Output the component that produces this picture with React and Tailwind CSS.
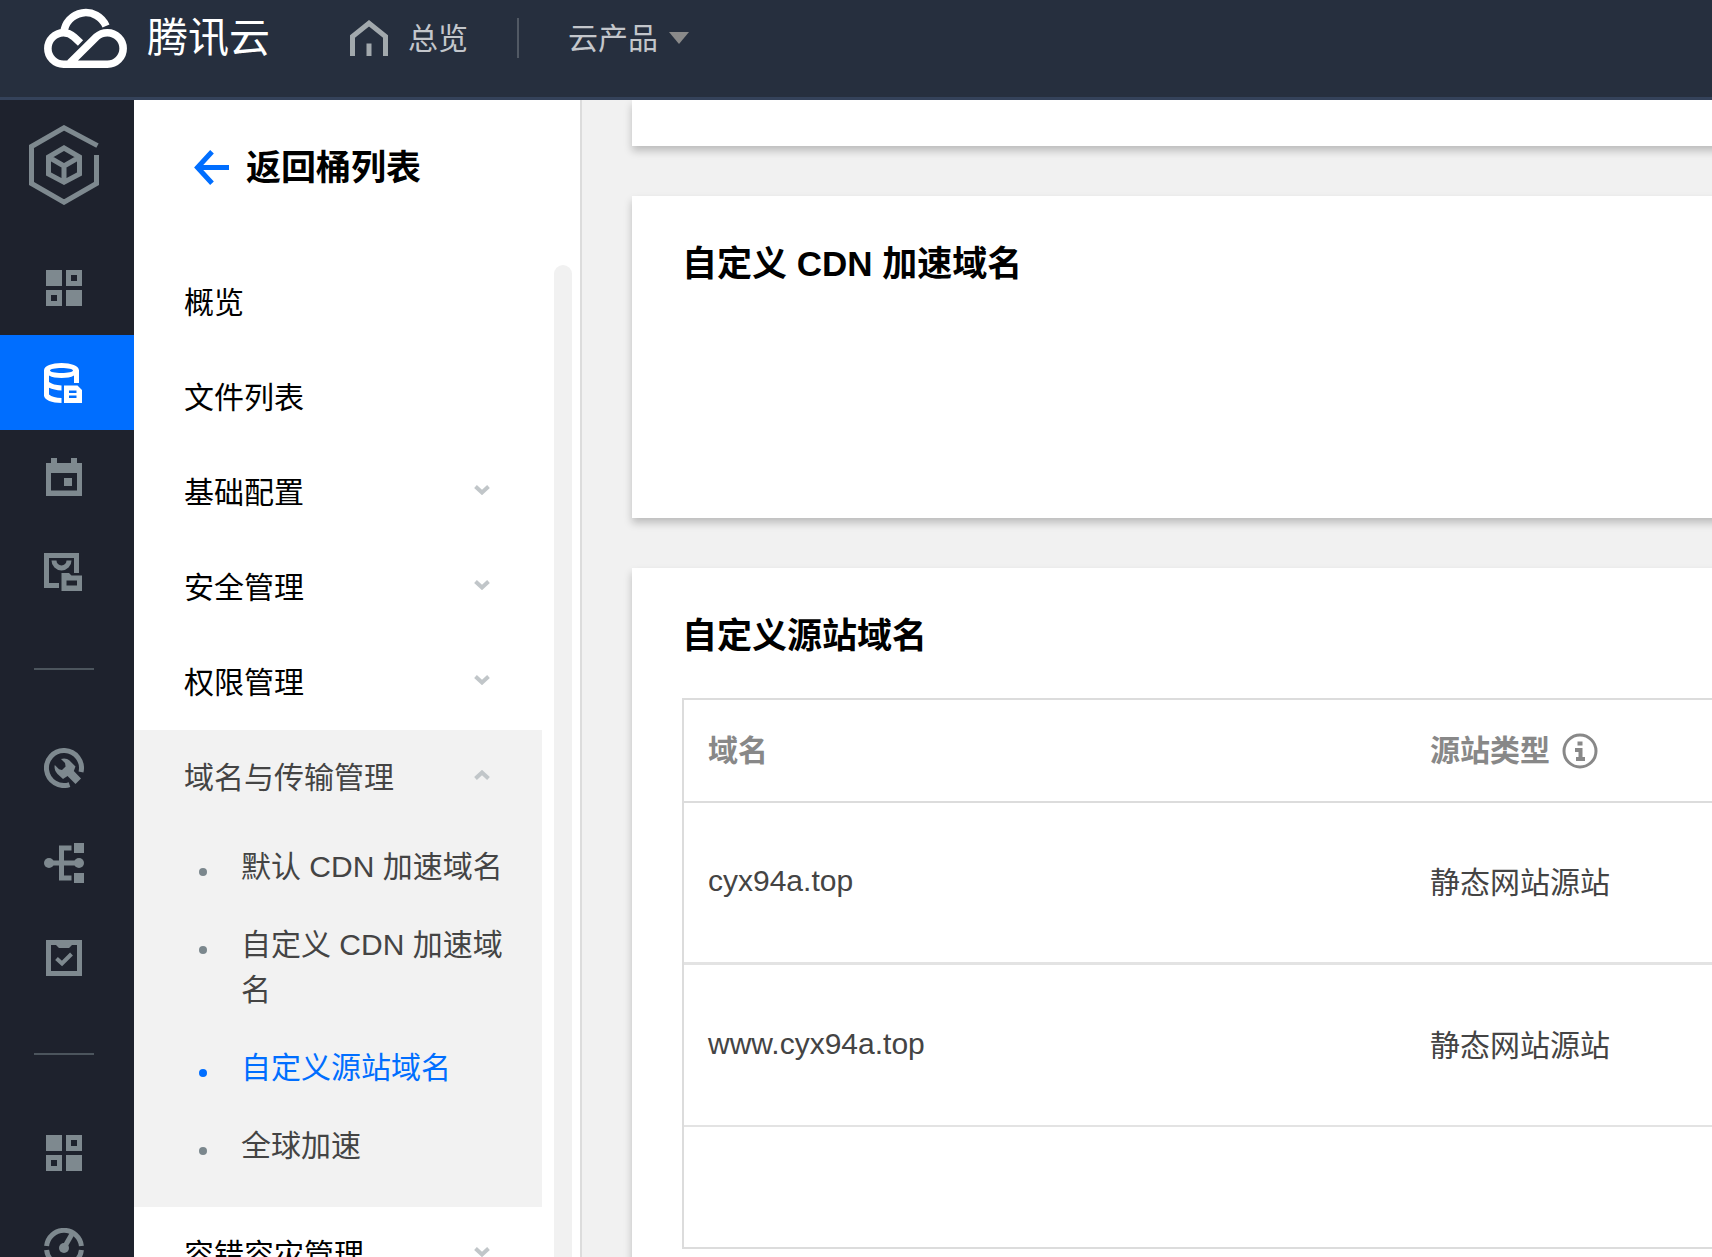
import React, { useState } from 'react';

const GridIcon = () => (
  <svg viewBox="0 0 40 40" className="w-10 h-10" fill="currentColor" fillRule="evenodd" aria-hidden="true">
    <path d="M2 2h16v16H2zM22 2h16v16H22zM27 7v6h6V7zM2 22h16v16H2zM7 27v6h6v-6zM22 22h16v16H22z" />
  </svg>
);

const BucketIcon = () => (
  <svg viewBox="0 0 40 40" className="w-10 h-10" fill="currentColor" fillRule="evenodd" aria-hidden="true">
    <path d="M17.5 0C27 0 35 2.8 35 7.5V20H30V12.5C27 14.3 22.5 15 17.5 15S8 14.3 5 12.5V19C7.5 21 12 22.2 17.5 22.5V27.5C12.5 27.3 8 26.3 5 24.8V31.5C7.5 33.8 12 35 17.5 35V40C8 40 0 37 0 32.5V7.5C0 2.8 8 0 17.5 0zM17.5 5C11 5 6 6 6 7.5S11 10 17.5 10S29 9 29 7.5S24 5 17.5 5z" />
    <path d="M20 22.5H33.5L38 27V40H20zM25 27.5V30H32.5V27.5zM25 32.5V35H32.5V32.5z" />
  </svg>
);

const CalendarIcon = () => (
  <svg viewBox="0 0 40 40" className="w-10 h-10" fill="currentColor" fillRule="evenodd" aria-hidden="true">
    <path d="M7 0h6v5h14V0h6v5h5v33H2V5h5zM7 15v17.5h26V15z" />
    <path d="M20 20h8v8h-8z" />
  </svg>
);

const FolderIcon = () => (
  <svg viewBox="0 0 40 40" className="w-10 h-10" fill="currentColor" fillRule="evenodd" aria-hidden="true">
    <path d="M0 0H35V20H30V5H5V30H15V35H0z" />
    <path d="M7.5 7.5H12.5A5 5 0 0 0 22.5 7.5H27.5A10 10 0 0 1 7.5 7.5z" />
    <path d="M17.5 20H25L27.5 22.5H38V38H17.5zM22.5 27.5V32.5H33V27.5z" />
  </svg>
);

const WrenchIcon = () => (
  <svg viewBox="0 0 40 40" className="w-10 h-10" aria-hidden="true">
    <path d="M25.5 36.6A17.5 17.5 0 1 1 37 24" fill="none" stroke="currentColor" strokeWidth="5" />
    <path
      d="M17 11C20 9.8 23.5 10.5 25.5 12.5L31.5 18.5L29.8 23L37 30.5L31.5 36L23.5 28L19 31L13.5 26C11 23.5 10 20 10.8 17L15 21.3L18 22L21.6 18.5L21 15z"
      fill="currentColor"
    />
  </svg>
);

const TreeIcon = () => (
  <svg viewBox="0 0 40 40" className="w-10 h-10" fill="currentColor" aria-hidden="true">
    <path d="M15 2.5H27.5V7.5H20V17.5H35V22.5H20V32.5H27.5V37.5H15V22.5H5V17.5H15z" />
    <path d="M30 0h10v10H30zM30 30h10v10H30z" />
    <circle cx="5" cy="20" r="5" />
    <circle cx="35" cy="20" r="5" />
  </svg>
);

const TaskIcon = () => (
  <svg viewBox="0 0 40 40" className="w-10 h-10" fill="currentColor" fillRule="evenodd" aria-hidden="true">
    <path d="M2 2H38V38H2zM7 7V33H33V7H28L25 10H15L12 7z" />
    <path d="M12.5 20.5L18 25.5L27.5 16" fill="none" stroke="currentColor" strokeWidth="4" />
  </svg>
);

const GaugeIcon = () => (
  <svg viewBox="0 0 40 40" className="w-10 h-10" aria-hidden="true">
    <path
      d="M2.6 18A17.5 17.5 0 0 1 37.4 18M2.6 22A17.5 17.5 0 0 0 37.4 22"
      fill="none"
      stroke="currentColor"
      strokeWidth="5"
    />
    <path d="M20 20L28.5 5" fill="none" stroke="currentColor" strokeWidth="5" />
    <circle cx="20" cy="20" r="5" fill="currentColor" />
  </svg>
);

const Chevron = ({ up }) => (
  <svg viewBox="0 0 16 10" className="w-4 h-[10px] mb-[5px]" fill="none" stroke="#c1c6c9" strokeWidth="4" aria-hidden="true">
    <path d={up ? 'M1.5 8.5L8 2.5L14.5 8.5' : 'M1.5 1.5L8 7.5L14.5 1.5'} />
  </svg>
);

const railGroups = [
  [
    { label: '概览', Icon: GridIcon },
    { label: '存储桶列表', Icon: BucketIcon, active: true },
    { label: '日历', Icon: CalendarIcon },
    { label: '文件', Icon: FolderIcon },
  ],
  [
    { label: '工具', Icon: WrenchIcon },
    { label: '迁移', Icon: TreeIcon },
    { label: '任务', Icon: TaskIcon },
  ],
  [
    { label: '应用', Icon: GridIcon },
    { label: '监控', Icon: GaugeIcon },
  ],
];

const menu = [
  { label: '概览' },
  { label: '文件列表' },
  { label: '基础配置', children: [] },
  { label: '安全管理', children: [] },
  { label: '权限管理', children: [] },
  {
    label: '域名与传输管理',
    children: ['默认 CDN 加速域名', '自定义 CDN 加速域名', '自定义源站域名', '全球加速'],
  },
  { label: '容错容灾管理', children: [] },
];

const domains = [
  { name: 'cyx94a.top', type: '静态网站源站' },
  { name: 'www.cyx94a.top', type: '静态网站源站' },
];

const Header = () => (
  <header className="flex items-center shrink-0 h-[100px] pl-11 pb-[21px] bg-[#262f3e] border-b-3 border-[#34425a] text-[#c3c6cb] text-[30px] whitespace-nowrap">
    <a href="#home" className="flex items-center text-white text-[41px] leading-[60px]">
      <svg viewBox="44 8 83 60" className="w-[83px] h-[60px] mr-5" fill="none" stroke="currentColor" strokeWidth="7.6" aria-hidden="true">
        <path d="M63.8 33A22 22 0 0 1 106 26" />
        <path d="M80.5 43L74 37C71 34.3 67.8 32.7 63.6 32.7A15.75 15.75 0 0 0 63.6 64.2H107.4A15.75 15.75 0 0 0 107.4 32.7C103 32.7 99.5 34 96.5 36.8L70 63" />
      </svg>
      腾讯云
    </a>
    <a href="#overview" className="flex items-center ml-20">
      <svg viewBox="0 0 38 36" className="w-[38px] h-9 mr-5" fill="none" stroke="#a2a9ad" strokeWidth="5" aria-hidden="true">
        <path d="M2.5 36V16.5L19 3.2L35.5 16.5V36M19 23.5V36" />
      </svg>
      总览
    </a>
    <span className="w-0.5 h-10 mx-[49px] bg-[#515964]" />
    <button type="button" className="flex items-center">
      云产品
      <svg viewBox="0 0 20 12" className="w-5 h-3 ml-[11px]" fill="#8a8a8a" aria-hidden="true">
        <path d="M0 0H20L10 12z" />
      </svg>
    </button>
  </header>
);

const Rail = () => (
  <nav className="shrink-0 w-[134px] bg-[#1e222d] text-[#7e898f]">
    <div className="flex justify-center h-[140px] pt-[25px] pr-1.5">
      <svg viewBox="29 125 70 80" className="w-[70px] h-20" fill="none" stroke="currentColor" strokeWidth="5" aria-hidden="true">
        <path d="M97.5 145.6L64 127.8L31.5 146.5V183.5L64 202.2L96.5 183.5V155" />
        <path d="M64 148L79.5 157V174L64 182.2L48.5 174V157zM48.5 157L64 166L79.5 157M64 166V182" />
      </svg>
    </div>
    {railGroups.map((group, i) => (
      <div key={i}>
        {i > 0 && <hr className="w-[60px] mt-12 mb-[50px] ml-[34px] border-t-2 border-[#4c555d]" />}
        {group.map(({ label, Icon, active }) => (
          <a
            key={label}
            href="#nav"
            aria-label={label}
            className={`flex items-center justify-center h-[95px] pr-1.5 ${active ? 'bg-[#006eff] text-white' : ''}`}
          >
            <Icon />
          </a>
        ))}
      </div>
    ))}
  </nav>
);

const SideMenu = () => {
  const [open, setOpen] = useState('域名与传输管理');
  const [current, setCurrent] = useState('自定义源站域名');

  return (
    <aside className="flex flex-col shrink-0 w-[448px] bg-white border-r-2 border-[#dcdcdc]">
      <a href="#buckets" className="flex items-center shrink-0 h-[155px] pl-15 pb-5 text-[35px] font-bold text-black">
        <svg viewBox="0 0 35 35" className="w-[35px] h-[35px] mr-[17px]" fill="none" stroke="#006eff" strokeWidth="5" aria-hidden="true">
          <path d="M18 1.8L3.5 17.5L18 33.2M3.5 17.5H35" />
        </svg>
        返回桶列表
      </a>
      <div className="flex flex-1 min-h-0">
        <ul className="w-[408px]">
          {menu.map((item) => {
            const expanded = open === item.label && item.children;
            return (
              <li key={item.label} className={expanded ? 'bg-[#f2f2f2] text-[#444]' : 'text-black'}>
                <button
                  type="button"
                  onClick={() => setOpen(expanded ? '' : item.label)}
                  className="flex items-center justify-between w-full h-[95px] pl-[50px] pr-[52px] text-left"
                >
                  {item.label}
                  {item.children && <Chevron up={expanded} />}
                </button>
                {expanded && (
                  <ul className="flex flex-col gap-[3px] pt-1 pb-6">
                    {item.children.map((child) => (
                      <li key={child}>
                        <a
                          href="#domain"
                          onClick={() => setCurrent(child)}
                          className={`flex py-[15px] pl-[65px] pr-5 leading-[45px] ${current === child ? 'text-[#006eff]' : ''}`}
                        >
                          <span
                            className={`shrink-0 w-2 h-2 mt-6 mr-[34px] rounded-full ${
                              current === child ? 'bg-[#006eff]' : 'bg-[#7b878d]'
                            }`}
                          />
                          {child}
                        </a>
                      </li>
                    ))}
                  </ul>
                )}
              </li>
            );
          })}
        </ul>
        <div className="w-[18px] mt-[10px] ml-3 rounded-t-full bg-[#f1f1f1]" />
      </div>
    </aside>
  );
};

const Card = ({ title, className, children }) => (
  <section className={`shrink-0 pl-[50px] bg-white shadow-[0_5px_8px_rgba(0,0,0,0.22)] ${className}`}>
    {title && <h2 className="pt-[43px] text-[35px] leading-[50px] font-bold text-black">{title}</h2>}
    {children}
  </section>
);

const App = () => {
  return (
    <div
      lang="zh-CN"
      className="flex flex-col h-screen overflow-hidden bg-[#f1f1f1] text-[30px] leading-[45px] text-[#444] font-['Liberation_Sans','Noto_Sans_CJK_SC',sans-serif]"
    >
      <Header />
      <div className="flex flex-1 min-h-0">
        <Rail />
        <SideMenu />
        <main className="flex flex-col flex-1 min-w-0 gap-[50px] pl-[50px] -mr-5 overflow-hidden">
          <Card className="h-[46px]" />
          <Card title="自定义 CDN 加速域名" className="h-[322px]" />
          <Card title="自定义源站域名" className="pb-[50px]">
            <table className="w-full mt-[37px] border-separate border-spacing-0 border-t-2 border-l-2 border-[#dcdcdc]">
              <thead className="text-[#888] text-left">
                <tr>
                  <th className="w-[722px] h-[103px] px-6 border-b-2 border-[#dcdcdc]">域名</th>
                  <th className="px-6 border-b-2 border-[#dcdcdc]">
                    <span className="flex items-center">
                      源站类型
                      <svg viewBox="0 0 36 36" className="w-9 h-9 ml-3" fill="none" stroke="currentColor" strokeWidth="3" aria-hidden="true">
                        <circle cx="18" cy="18" r="16" />
                        <path d="M15.5 10.5h5M13 17h5.5v9M14 26h9" strokeWidth="4" />
                      </svg>
                    </span>
                  </th>
                </tr>
              </thead>
              <tbody className="[&>tr:first-child>td]:border-b-3">
                {domains.map((d) => (
                  <tr key={d.name}>
                    <td className="h-[162px] px-6 pb-1 border-b-2 border-[#e3e3e3]">{d.name}</td>
                    <td className="px-6 border-b-2 border-[#e3e3e3]">{d.type}</td>
                  </tr>
                ))}
                <tr>
                  <td colSpan={2} className="h-[122px] border-b-2 border-[#dcdcdc]" />
                </tr>
              </tbody>
            </table>
          </Card>
        </main>
      </div>
    </div>
  );
};

export default App;
